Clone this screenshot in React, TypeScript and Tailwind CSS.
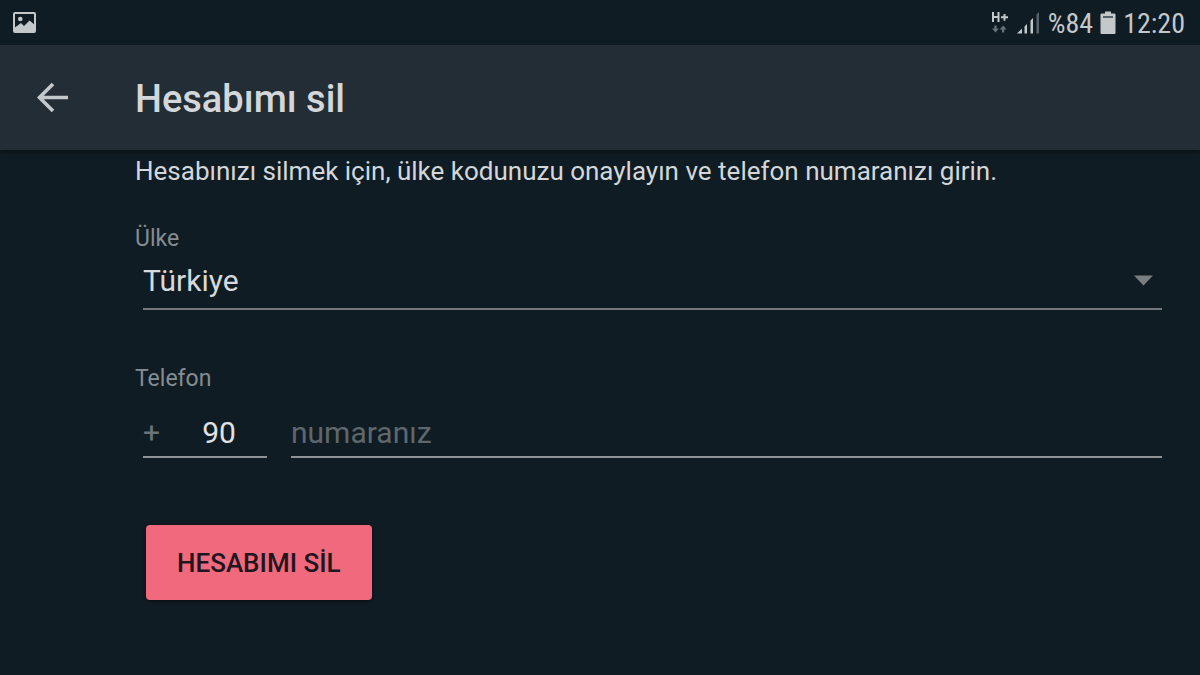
import React from "react";

function StatusBar() {
  return (
    <div className="flex h-[45px] items-center justify-between pr-[15px] pl-[13px] text-[#c3c8cb]">
      <svg width="23" height="21" viewBox="0 0 23 21" aria-hidden="true">
        <rect x="1" y="1" width="21" height="19" rx="1" fill="none" stroke="currentColor" strokeWidth="2" />
        <circle cx="7.3" cy="7" r="2.3" fill="currentColor" />
        <path d="M1 16 L4 14 L8 11 L11 14 L16.500 8.500 L22 13 V20 H1 Z" fill="currentColor" />
      </svg>
      <div className="flex items-center">
        <svg className="mr-2" width="18" height="24" viewBox="0 0 18 24" aria-hidden="true">
          <path d="M2 1 V11 M7.500 1 V11 M2 6 H7.500 M10 6.300 H17 M13.500 3 V9.800" fill="none" stroke="currentColor" strokeWidth="2" />
          <path d="M3.400 14.500 H5.600 V17.500 H8 L4.500 21.500 L1 17.500 H3.400 Z M11 21.500 H13.200 V18.500 H15.600 L12.100 14.500 L8.600 18.500 H11 Z" fill="#66737a" />
        </svg>
        <svg className="mr-[7px]" width="24" height="24" viewBox="0 0 24 24" aria-hidden="true">
          <path d="M0 22.500 H5 V17.500 Z M7.500 15.500 L10 13 V22.500 H7.500 Z M13.500 9.500 L16 7 V22.500 H13.500 Z" fill="currentColor" />
          <path d="M19.500 3.500 L22 1 V22.500 H19.500 Z" fill="#58646b" />
        </svg>
        <span className="pt-0.5 font-['Roboto_Condensed','Roboto',sans-serif] text-[28px] leading-8">%84</span>
        <svg className="mr-[7px] ml-[7px]" width="16" height="24" viewBox="0 0 16 24" aria-hidden="true">
          <path d="M5 0.500 H11 V2.500 H14.500 Q15.500 2.500 15.500 3.500 V22 Q15.500 23 14.500 23 H1.500 Q0.500 23 0.500 22 V3.500 Q0.500 2.500 1.500 2.500 H5 Z" fill="currentColor" />
          <path d="M3 5 H13 V7 H3 Z" fill="#56626a" />
        </svg>
        <span className="pt-0.5 font-['Roboto_Condensed','Roboto',sans-serif] text-[28px] leading-8">12:20</span>
      </div>
    </div>
  );
}

export default function App() {
  return (
    <div className="min-h-screen bg-[#101c23] font-['Roboto',sans-serif] text-[#d3d7da]">
      <StatusBar />
      <header className="flex h-[105px] items-center bg-[#232d35] pl-9 shadow-[0_2px_5px_rgba(0,0,0,0.45)]">
        <button type="button" aria-label="Geri" className="mr-[66px] text-[#c5c8cb]">
          <svg width="33" height="32" viewBox="0 0 33 32" fill="none" stroke="currentColor" strokeWidth="3.600" aria-hidden="true">
            <path d="M17 2 L3.500 15.500 L17 29 M3.500 15.500 H32" />
          </svg>
        </button>
        <h1 className="pt-1 text-[38px] font-medium">Hesabımı sil</h1>
      </header>
      <main className="pr-[38px] pl-[135px]">
        <p className="text-[26px] leading-[42px]">
          Hesabınızı silmek için, ülke kodunuzu onaylayın ve telefon numaranızı girin.
        </p>
        <form onSubmit={(e) => e.preventDefault()}>
          <div className="mt-[33px]">
            <label htmlFor="country" className="block text-[23px] leading-7 text-[#858d92]">
              Ülke
            </label>
            <div className="ml-2 grid items-center border-b-2 border-[#74797e]">
              <select
                id="country"
                className="col-start-1 row-start-1 h-[55px] w-full appearance-none bg-transparent text-[30px] text-[#d7dadd] outline-none"
              >
                <option>Türkiye</option>
              </select>
              <svg
                className="pointer-events-none col-start-1 row-start-1 mr-[9px] justify-self-end"
                width="19"
                height="11"
                viewBox="0 0 19 11"
                aria-hidden="true"
              >
                <path d="M0 0.500 H19 L9.500 10.500 Z" fill="#7a7e80" />
              </svg>
            </div>
          </div>
          <div className="mt-[55px]">
            <label htmlFor="phone" className="block text-[23px] leading-7 text-[#858d92]">
              Telefon
            </label>
            <div className="mt-2 ml-2 flex gap-6">
              <div className="flex h-[57px] w-[124px] items-center border-b-2 border-[#8e9395] pt-2">
                <span className="w-7 text-[30px] text-[#6b7479]">+</span>
                <input
                  aria-label="Ülke kodu"
                  defaultValue="90"
                  className="h-full w-24 min-w-0 bg-transparent text-center text-[30px] text-[#e0e3e5] outline-none"
                />
              </div>
              <input
                id="phone"
                type="tel"
                placeholder="numaranız"
                className="h-[57px] min-w-0 flex-1 border-b-2 border-[#8e9395] bg-transparent pt-2 text-[30px] outline-none placeholder:text-[#5e676c]"
              />
            </div>
          </div>
          <button
            type="submit"
            className="mt-[67px] ml-[11px] h-[75px] rounded bg-[#f1697c] px-[31px] pt-0.5 text-[26px] font-medium text-[#20161f] shadow-[0_1px_4px_rgba(0,0,0,0.5)]"
          >
            HESABIMI SİL
          </button>
        </form>
      </main>
    </div>
  );
}
